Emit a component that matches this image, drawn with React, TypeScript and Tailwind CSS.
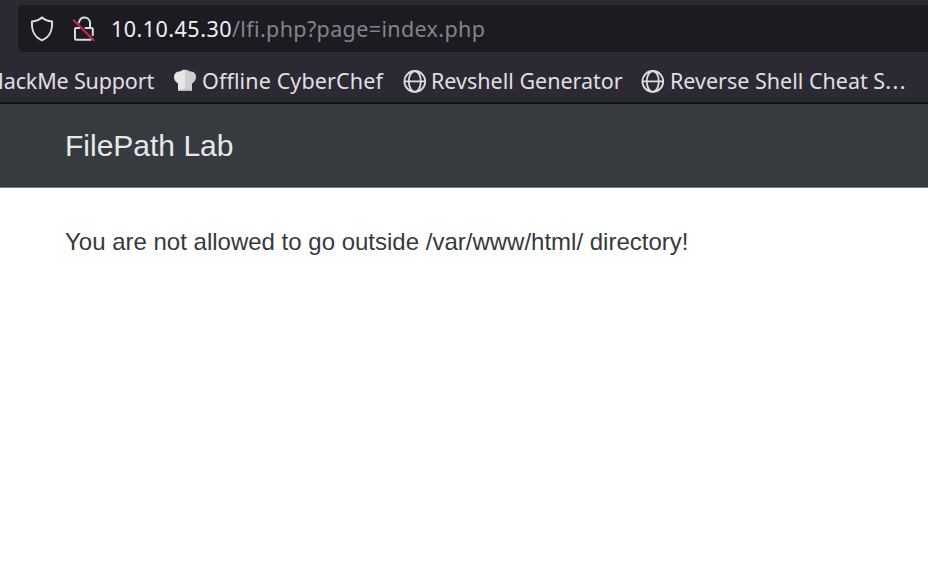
import type { ReactNode } from "react";

function ShieldIcon() {
  return (
    <svg className="block h-[26px] w-6 shrink-0" viewBox="0 0 24 26" fill="none" stroke="#dddce1" strokeWidth="2" strokeLinejoin="round">
      <path d="M12 1.4 C9.5 3.7 6 4.9 1.9 5.6 C1.6 14.5 3.6 20.8 12 24.3 C20.4 20.8 22.4 14.5 22.1 5.6 C18 4.9 14.5 3.7 12 1.4Z" />
    </svg>
  );
}

function InsecureLockIcon() {
  return (
    <svg className="block h-[26px] w-6 shrink-0" viewBox="0 0 24 26" fill="none" strokeLinecap="round">
      <path d="M7 6.4 C7.6 3.4 9.6 1.6 12.4 1.6 C15.8 1.6 18 3.9 18 7 V12 H19.3 Q20.8 12 20.8 13.4 V19" stroke="#dddce1" strokeWidth="2" />
      <path d="M13.5 12 H18" stroke="#dddce1" strokeWidth="2" />
      <path d="M7.4 12 H4.2 Q3 12 3 13.2 V22.6 Q3 23.8 4.2 23.8 H18.5" stroke="#dddce1" strokeWidth="2" />
      <path d="M1.8 4.2 L21.6 24.2" stroke="#cf2b44" strokeWidth="2" />
    </svg>
  );
}

function GlobeIcon() {
  return (
    <svg className="block size-6 shrink-0" viewBox="0 0 24 24" fill="none" stroke="#dddce1" strokeWidth="1.8">
      <circle cx="11.8" cy="12.4" r="10.4" />
      <ellipse cx="11.8" cy="12.4" rx="6" ry="10.4" />
      <path d="M1.4 12.4 H22.2" />
    </svg>
  );
}

function ChefHatIcon() {
  return (
    <svg className="block size-6 shrink-0" viewBox="0 0 24 24">
      <path d="M5 22 V14.5 C2.5 13 1 10.8 1 8 C1 4.5 4 2.2 7 2.6 C8.3 1.3 10 0.8 12 0.8 V22Z" fill="#e6e6e6" />
      <path d="M12 0.8 C14 0.8 15.7 1.3 17 2.6 C20.5 2.2 23 4.5 23 8 C23 10.8 21.5 13 19 14.5 V22 H12Z" fill="#cfcfcf" />
      <path d="M5 20.5 H19 V22 H5Z" fill="#b8b8b8" />
    </svg>
  );
}

function Bookmark({ icon, label, className }: { icon: ReactNode; label: ReactNode; className: string }) {
  return (
    <div className="flex shrink-0 items-center gap-[5px]">
      {icon}
      <span className={`whitespace-nowrap ${className}`}>{label}</span>
    </div>
  );
}

export default function App() {
  return (
    <div className="flex h-[583px] w-[928px] flex-col overflow-hidden bg-white">
      <div className="flex h-[104px] shrink-0 flex-col border-b-2 border-[#121217] bg-[#2b2a33] pt-[5px] font-['Noto_Sans',sans-serif] text-[21.5px] leading-8 text-[#e0dfe4]">
        <div className="ml-[18px] flex h-[47px] shrink-0 items-center rounded-l-[5px] bg-[#1c1b22] pl-3">
          <ShieldIcon />
          <div className="ml-[18px]">
            <InsecureLockIcon />
          </div>
          <div className="ml-[15px] flex whitespace-nowrap pt-px">
            <span className="tracking-[0.48px] text-[#f0f0f3]">10.10.45.30</span>
            <span className="tracking-[0.37px] text-[#84838a]">/lfi.php?page=index.php</span>
          </div>
        </div>
        <div className="flex h-[50px] w-[928px] shrink-0 items-center overflow-hidden pt-[7px]">
          <div className="flex w-[154px] shrink-0 justify-end">
            <span className="whitespace-nowrap tracking-[-0.16px]">TryHackMe Support</span>
          </div>
          <div className="ml-[19px] flex w-[230px] shrink-0">
            <Bookmark icon={<ChefHatIcon />} label="Offline CyberChef" className="tracking-[0.12px]" />
          </div>
          <div className="flex w-[238px] shrink-0">
            <Bookmark icon={<GlobeIcon />} label="Revshell Generator" className="-ml-px" />
          </div>
          <Bookmark
            icon={<GlobeIcon />}
            label={
              <>
                Reverse Shell Cheat S<span className="tracking-[1.5px]">...</span>
              </>
            }
            className=""
          />
        </div>
      </div>
      <header className="flex h-[83px] shrink-0 items-center bg-[#363b3f] pl-[65px] font-['Liberation_Sans',Arial,sans-serif] text-[30px] text-[#e8e8e8]">
        <span>FilePath Lab</span>
      </header>
      <main className="border-t border-[#7d8083] px-[65px] pt-9 font-['Liberation_Sans',Arial,sans-serif] text-2xl leading-9 text-[#373a3c]">
        <p className="whitespace-nowrap">You are not allowed to go outside /var/www/html/ directory!</p>
      </main>
    </div>
  );
}
